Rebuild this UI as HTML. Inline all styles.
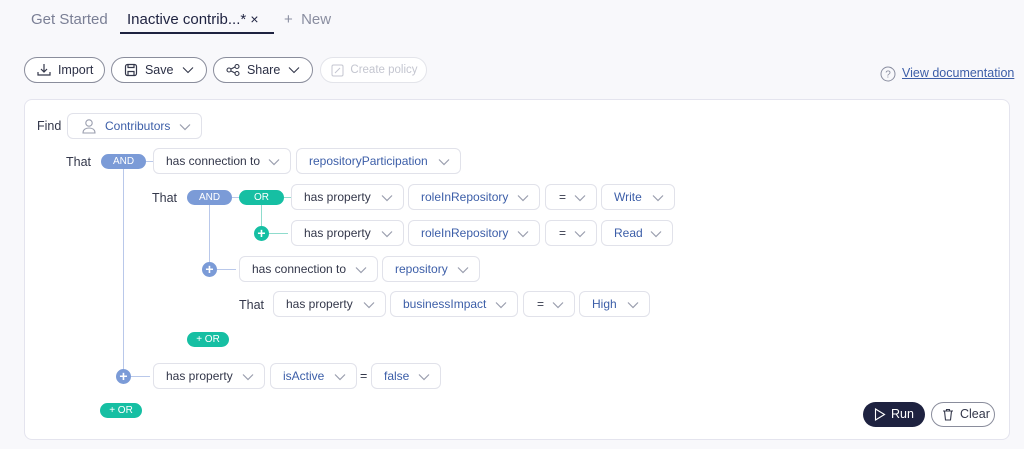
<!DOCTYPE html>
<html><head><meta charset="utf-8"><style>
*{box-sizing:border-box;margin:0;padding:0}
body{width:1024px;height:449px;background:#f8f8fb;font-family:"Liberation Sans",sans-serif;position:relative;overflow:hidden;color:#2b2f45}
.a{position:absolute}
.tab{font-size:15px;top:11px}
.btn{position:absolute;top:57px;height:26px;border:1px solid #8a8d9c;border-radius:13px;font-size:12.5px;display:flex;align-items:center;padding-left:12px;color:#2b2f45;background:#fff;white-space:nowrap}
.panel{position:absolute;left:24px;top:99px;width:986px;height:341px;background:#fff;border:1px solid #e4e4ee;border-radius:8px}
.dd{position:absolute;height:26px;border:1px solid #e1e2ea;border-radius:6px;background:#fff;font-size:12px;line-height:24px;padding-left:12px;color:#33374a}
.dd.b{color:#3c5ea8}
.dd svg{position:absolute;right:10px;top:9px}
.lbl{position:absolute;font-size:12.5px;color:#33374a}
.pill{position:absolute;height:15px;border-radius:8px;color:#fff;font-size:10px;line-height:16px;text-align:center}
.and{background:#7b9bd7}.or{background:#16bfa3}
.plus{position:absolute;width:15px;height:15px;border-radius:50%;color:#fff;font-size:14px;line-height:15px;text-align:center;font-weight:bold}
.vl{position:absolute;width:1px;background:#b9c8ea}
.hl{position:absolute;height:1px;background:#b9c8ea}
</style></head><body>
<div class="a tab" style="left:31px;color:#7a7f95">Get Started</div>
<div class="a tab" style="left:127px;color:#1e2240">Inactive contrib...* <span style="font-size:14px">×</span></div>
<div class="a" style="left:120px;top:32px;width:154px;height:2px;background:#1e2240"></div>
<div class="a tab" style="left:284px;color:#8a8ea0">+&nbsp;&nbsp;New</div>

<div class="btn" style="left:24px;width:81px"><svg width="14" height="14" viewBox="0 0 14 14" fill="none" stroke="#33374a" stroke-width="1.2"><path d="M7 1v8M4 6l3 3 3-3M1 9v3h12V9"/></svg>&nbsp;&nbsp;Import</div>
<div class="btn" style="left:111px;width:96px"><svg width="14" height="14" viewBox="0 0 14 14" fill="none" stroke="#33374a" stroke-width="1.2"><rect x="1.5" y="1.5" width="11" height="11" rx="2"/><path d="M4 1.5v3h6v-3M4 12.5v-4h6v4"/></svg>&nbsp;&nbsp;Save<svg style="position:absolute;right:12px" width="12" height="8" viewBox="0 0 12 8" fill="none" stroke="#33374a" stroke-width="1.1"><path d="M1 1.5l5 5 5-5"/></svg></div>
<div class="btn" style="left:213px;width:100px"><svg width="14" height="14" viewBox="0 0 14 14" fill="none" stroke="#33374a" stroke-width="1.1"><circle cx="3" cy="7" r="2"/><circle cx="11" cy="3.5" r="2"/><circle cx="11" cy="10.5" r="2"/><path d="M5 6l4-2M5 8l4 2"/></svg>&nbsp;&nbsp;Share<svg style="position:absolute;right:12px" width="12" height="8" viewBox="0 0 12 8" fill="none" stroke="#33374a" stroke-width="1.1"><path d="M1 1.5l5 5 5-5"/></svg></div>
<div class="btn" style="left:320px;width:107px;border-color:#e3e4ea;color:#c4c6d0;font-size:11.5px;padding-left:10px"><svg width="13" height="13" viewBox="0 0 13 13" fill="none" stroke="#c4c6d0" stroke-width="1"><rect x="1" y="1" width="11" height="11" rx="1.5"/><path d="M4 9l5-5"/></svg>&nbsp;&nbsp;Create policy</div>

<svg class="a" style="left:880px;top:66px" width="16" height="16" viewBox="0 0 16 16" fill="none" stroke="#8a8ea0" stroke-width="1"><circle cx="8" cy="8" r="7"/><text x="8" y="11.5" font-size="10" text-anchor="middle" fill="#8a8ea0" stroke="none" font-family="Liberation Sans">?</text></svg>
<div class="a" style="left:902px;top:66px;font-size:12.5px;color:#3c5ea8;text-decoration:underline">View documentation</div>

<div class="panel"></div>

<div class="lbl" style="left:37px;top:119px">Find</div>
<div class="dd b" style="left:67px;top:113px;width:135px;padding-left:37px"><svg style="position:absolute;left:13px;top:4px" width="16" height="16" viewBox="0 0 16 16" fill="none" stroke="#9a9eae" stroke-width="1.1"><circle cx="8" cy="5" r="3.2"/><path d="M2 15c0-3.5 2.7-5 6-5s6 1.5 6 5z"/></svg>Contributors<svg width="12" height="8" viewBox="0 0 12 8" fill="none" stroke="#9a9eae" stroke-width="1.2"><path d="M1 1.5l5 5 5-5"/></svg></div>

<div class="vl" style="left:123px;top:168px;height:208px"></div>
<div class="vl" style="left:209px;top:204px;height:65px"></div>
<div class="vl" style="left:261px;top:204px;height:29px;background:#8fdccd"></div>
<div class="hl" style="left:146px;top:161px;width:7px"></div>
<div class="hl" style="left:232px;top:197px;width:7px"></div>
<div class="hl" style="left:284px;top:197px;width:7px;background:#8fdccd"></div>
<div class="hl" style="left:268px;top:233px;width:20px;background:#8fdccd"></div>
<div class="hl" style="left:216px;top:269px;width:20px"></div>
<div class="hl" style="left:130px;top:376px;width:20px"></div>

<div class="lbl" style="left:66px;top:155px">That</div>
<div class="pill and" style="left:101px;top:154px;width:45px">AND</div>
<div class="dd" style="left:153px;top:148px;width:138px">has connection to<svg width="12" height="8" viewBox="0 0 12 8" fill="none" stroke="#9a9eae" stroke-width="1.2"><path d="M1 1.5l5 5 5-5"/></svg></div>
<div class="dd b" style="left:296px;top:148px;width:165px">repositoryParticipation<svg width="12" height="8" viewBox="0 0 12 8" fill="none" stroke="#9a9eae" stroke-width="1.2"><path d="M1 1.5l5 5 5-5"/></svg></div>

<div class="lbl" style="left:152px;top:191px">That</div>
<div class="pill and" style="left:187px;top:190px;width:45px">AND</div>
<div class="pill or" style="left:239px;top:190px;width:45px">OR</div>
<div class="dd" style="left:291px;top:184px;width:113px">has property<svg width="12" height="8" viewBox="0 0 12 8" fill="none" stroke="#9a9eae" stroke-width="1.2"><path d="M1 1.5l5 5 5-5"/></svg></div>
<div class="dd b" style="left:408px;top:184px;width:132px">roleInRepository<svg width="12" height="8" viewBox="0 0 12 8" fill="none" stroke="#9a9eae" stroke-width="1.2"><path d="M1 1.5l5 5 5-5"/></svg></div>
<div class="dd" style="left:545px;top:184px;width:52px;padding-left:13px">=<svg width="12" height="8" viewBox="0 0 12 8" fill="none" stroke="#9a9eae" stroke-width="1.2"><path d="M1 1.5l5 5 5-5"/></svg></div>
<div class="dd b" style="left:601px;top:184px;width:74px">Write<svg width="12" height="8" viewBox="0 0 12 8" fill="none" stroke="#9a9eae" stroke-width="1.2"><path d="M1 1.5l5 5 5-5"/></svg></div>

<div class="plus or" style="left:254px;top:226px">+</div>
<div class="dd" style="left:291px;top:220px;width:113px">has property<svg width="12" height="8" viewBox="0 0 12 8" fill="none" stroke="#9a9eae" stroke-width="1.2"><path d="M1 1.5l5 5 5-5"/></svg></div>
<div class="dd b" style="left:408px;top:220px;width:132px">roleInRepository<svg width="12" height="8" viewBox="0 0 12 8" fill="none" stroke="#9a9eae" stroke-width="1.2"><path d="M1 1.5l5 5 5-5"/></svg></div>
<div class="dd" style="left:545px;top:220px;width:52px;padding-left:13px">=<svg width="12" height="8" viewBox="0 0 12 8" fill="none" stroke="#9a9eae" stroke-width="1.2"><path d="M1 1.5l5 5 5-5"/></svg></div>
<div class="dd b" style="left:601px;top:220px;width:72px">Read<svg width="12" height="8" viewBox="0 0 12 8" fill="none" stroke="#9a9eae" stroke-width="1.2"><path d="M1 1.5l5 5 5-5"/></svg></div>

<div class="plus and" style="left:202px;top:262px">+</div>
<div class="dd" style="left:239px;top:256px;width:139px">has connection to<svg width="12" height="8" viewBox="0 0 12 8" fill="none" stroke="#9a9eae" stroke-width="1.2"><path d="M1 1.5l5 5 5-5"/></svg></div>
<div class="dd b" style="left:382px;top:256px;width:98px">repository<svg width="12" height="8" viewBox="0 0 12 8" fill="none" stroke="#9a9eae" stroke-width="1.2"><path d="M1 1.5l5 5 5-5"/></svg></div>

<div class="lbl" style="left:239px;top:298px">That</div>
<div class="dd" style="left:273px;top:291px;width:113px">has property<svg width="12" height="8" viewBox="0 0 12 8" fill="none" stroke="#9a9eae" stroke-width="1.2"><path d="M1 1.5l5 5 5-5"/></svg></div>
<div class="dd b" style="left:390px;top:291px;width:128px">businessImpact<svg width="12" height="8" viewBox="0 0 12 8" fill="none" stroke="#9a9eae" stroke-width="1.2"><path d="M1 1.5l5 5 5-5"/></svg></div>
<div class="dd" style="left:523px;top:291px;width:52px;padding-left:13px">=<svg width="12" height="8" viewBox="0 0 12 8" fill="none" stroke="#9a9eae" stroke-width="1.2"><path d="M1 1.5l5 5 5-5"/></svg></div>
<div class="dd b" style="left:579px;top:291px;width:71px">High<svg width="12" height="8" viewBox="0 0 12 8" fill="none" stroke="#9a9eae" stroke-width="1.2"><path d="M1 1.5l5 5 5-5"/></svg></div>

<div class="pill or" style="left:187px;top:332px;width:42px">+ OR</div>

<div class="plus and" style="left:116px;top:369px">+</div>
<div class="dd" style="left:153px;top:363px;width:112px">has property<svg width="12" height="8" viewBox="0 0 12 8" fill="none" stroke="#9a9eae" stroke-width="1.2"><path d="M1 1.5l5 5 5-5"/></svg></div>
<div class="dd b" style="left:270px;top:363px;width:87px">isActive<svg width="12" height="8" viewBox="0 0 12 8" fill="none" stroke="#9a9eae" stroke-width="1.2"><path d="M1 1.5l5 5 5-5"/></svg></div>
<div class="lbl" style="left:360px;top:369px">=</div>
<div class="dd b" style="left:371px;top:363px;width:70px">false<svg width="12" height="8" viewBox="0 0 12 8" fill="none" stroke="#9a9eae" stroke-width="1.2"><path d="M1 1.5l5 5 5-5"/></svg></div>

<div class="pill or" style="left:100px;top:403px;width:42px">+ OR</div>

<div class="a" style="left:863px;top:402px;width:62px;height:25px;border-radius:13px;background:#1e2240;color:#fff;font-size:12.5px;line-height:25px;padding-left:28px"><svg style="position:absolute;left:11px;top:6px" width="12" height="13" viewBox="0 0 12 13" fill="none" stroke="#fff" stroke-width="1.1"><path d="M1.5 1l9 5.5-9 5.5z"/></svg>Run</div>
<div class="a" style="left:931px;top:402px;width:64px;height:25px;border-radius:13px;border:1px solid #8a8d9c;background:#fff;color:#33374a;font-size:12.5px;line-height:23px;padding-left:28px"><svg style="position:absolute;left:10px;top:5px" width="12" height="13" viewBox="0 0 12 13" fill="none" stroke="#33374a" stroke-width="1.1"><path d="M1 3h10M4.5 3V1.5h3V3M2.5 3l1 9h5l1-9"/></svg>Clear</div>
</body></html>
